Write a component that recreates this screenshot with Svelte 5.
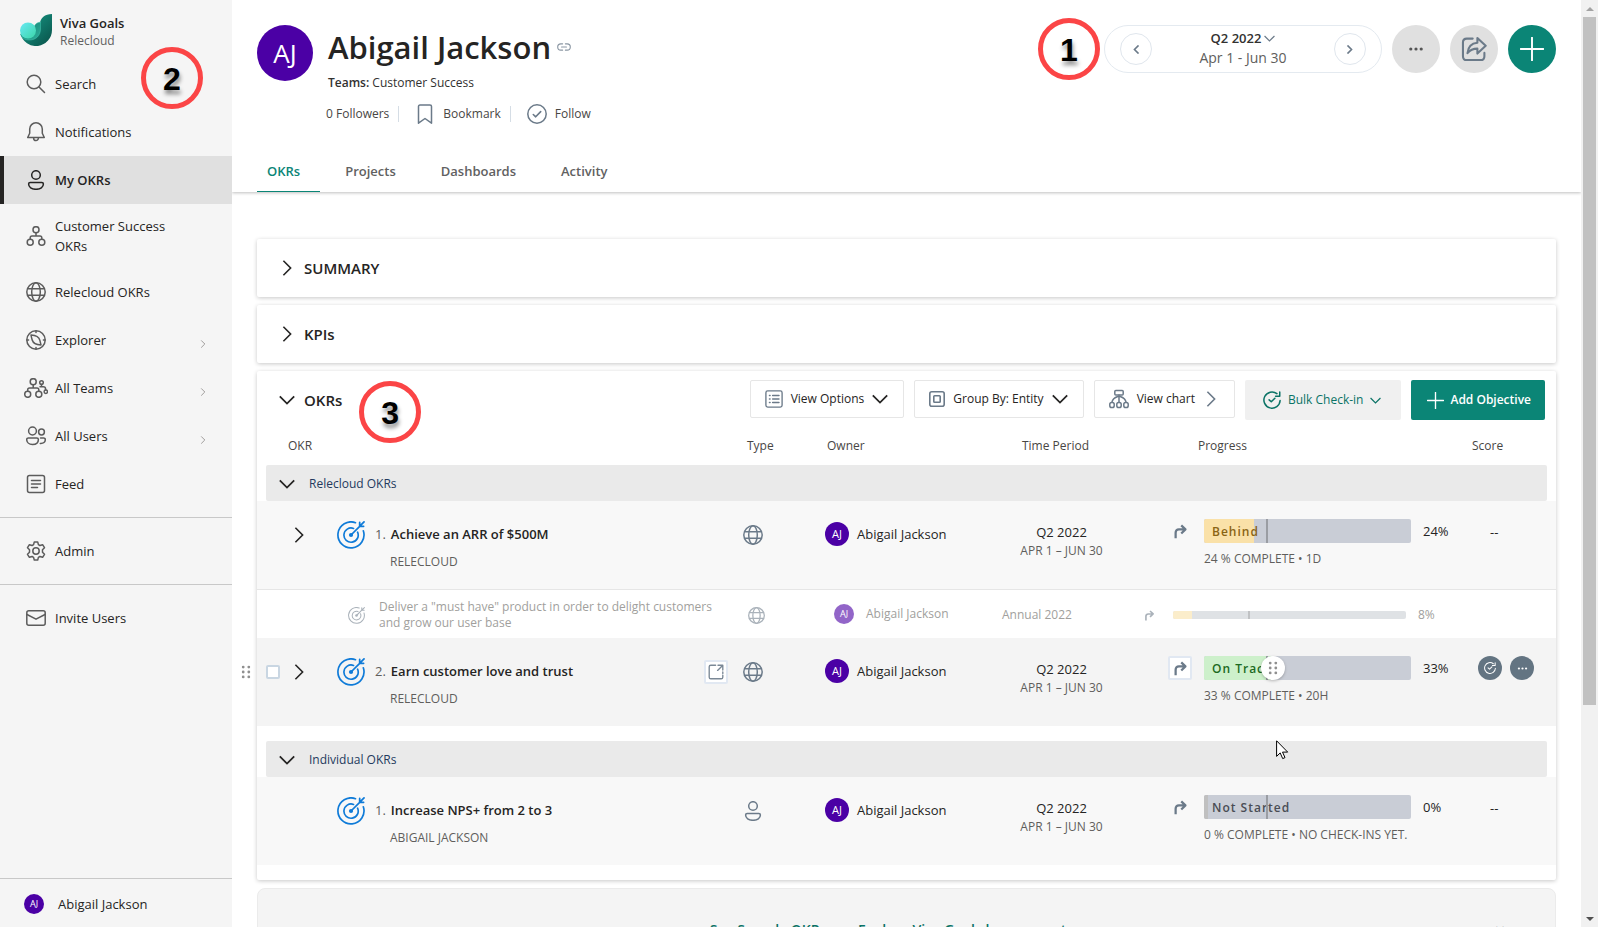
<script>
  const nav = [
    { label: 'Search', icon: 'search' },
    { label: 'Notifications', icon: 'bell' },
    { label: 'My OKRs', icon: 'person', active: true },
    { label: 'Customer Success OKRs', icon: 'org', tall: true },
    { label: 'Relecloud OKRs', icon: 'globe' },
    { label: 'Explorer', icon: 'compass', more: true },
    { label: 'All Teams', icon: 'teams', more: true },
    { label: 'All Users', icon: 'users', more: true },
    { label: 'Feed', icon: 'feed' }
  ];

  const tabs = ['OKRs', 'Projects', 'Dashboards', 'Activity'];

  const groups = [
    {
      name: 'Relecloud OKRs',
      rows: [
        {
          n: 1, title: 'Achieve an ARR of $500M', team: 'RELECLOUD', type: 'globe', expand: true,
          status: 'Behind', tone: 'behind', percent: 24, fill: 24, note: '24 % COMPLETE • 1D',
          child: {
            title: 'Deliver a "must have" product in order to delight customers and grow our user base',
            period: 'Annual 2022', percent: 8
          }
        },
        {
          n: 2, title: 'Earn customer love and trust', team: 'RELECLOUD', type: 'globe', expand: true, hover: true,
          status: 'On Track', tone: 'track', percent: 33, fill: 33, note: '33 % COMPLETE • 20H'
        }
      ]
    },
    {
      name: 'Individual OKRs',
      rows: [
        {
          n: 1, title: 'Increase NPS+ from 2 to 3', team: 'ABIGAIL JACKSON', type: 'person',
          status: 'Not Started', tone: 'idle', percent: 0, fill: 2, note: '0 % COMPLETE • NO CHECK-INS YET.'
        }
      ]
    }
  ];
</script>

{#snippet icon(name, size = 20)}
  <svg class="icon" width={size} height={size} viewBox="0 0 20 20" fill="none" stroke="currentColor" stroke-width="1.5" stroke-linecap="round" stroke-linejoin="round" aria-hidden="true">
    {#if name === 'search'}
      <circle cx="8" cy="8" r="6.8" /><path d="M13 13l5.5 5.5" />
    {:else if name === 'bell'}
      <path d="M10 .8a6.3 6.3 0 0 0-6.3 6.3v4.2l-2 4.2h16.6l-2-4.2V7.1A6.3 6.3 0 0 0 10 .8zM7.6 16a2.4 2.6 0 0 0 4.8 0" />
    {:else if name === 'person'}
      <circle cx="10" cy="5" r="4.3" /><path d="M4.2 12.5h11.6c1 0 1.6.7 1.6 1.5 0 3-3 5.3-7.4 5.3S2.6 17 2.6 14c0-.8.6-1.5 1.6-1.5z" />
    {:else if name === 'org'}
      <circle cx="10" cy="3.7" r="3" /><circle cx="4.2" cy="16.2" r="3" /><circle cx="15.8" cy="16.2" r="3" /><path d="M10 6.8V10M4.2 13v-1.2c0-1.1.7-1.8 1.8-1.8h8c1.1 0 1.8.7 1.8 1.8V13" />
    {:else if name === 'globe'}
      <circle cx="10" cy="10" r="9.2" /><ellipse cx="10" cy="10" rx="4.3" ry="9.2" /><path d="M1.7 6.7h16.6M1.7 13.3h16.6" />
    {:else if name === 'compass'}
      <circle cx="10" cy="10" r="9.2" /><path d="M5 5c3.5.2 8 1.7 8.8 5.2.5 2 .9 3.3 1.2 4.800-3.500-.2-7.800-1.500-8.800-5C5.600 8 5.200 6.500 5 5zM10 1v1.600M10 17.400V19M1 10h1.600M17.400 10H19" />
    {:else if name === 'feed'}
      <rect x="1.500" y="1.500" width="17" height="17" rx="2" /><path d="M5.500 6.500h9M5.500 10h9M5.500 13.500h6" />
    {:else if name === 'users'}
      <circle cx="6.500" cy="5" r="3.900" /><circle cx="15.500" cy="6" r="2.900" /><path d="M2.300 12h8.500c1 0 1.600.5 1.600 1.400 0 3-2.400 5-5.900 5s-5.800-2-5.800-5c0-.9.600-1.400 1.600-1.400zM14.500 12h3.200c1 0 1.600.5 1.600 1.400 0 2.700-1.800 4.300-5 4.100" />
    {:else if name === 'gear'}
      <circle cx="10" cy="10" r="3.200" /><path d="M8.300.9h3.400l.7 2.700 1.500.9 2.700-.8 1.900 3-2 2v2.600l2 2-1.900 3-2.700-.8-1.500.9-.7 2.700H8.300l-.7-2.700-1.500-.9-2.700.8-1.900-3 2-2V8.700l-2-2 1.900-3 2.700.8 1.500-.9z" />
    {:else if name === 'mail'}
      <rect x=".8" y="2.800" width="18.400" height="14.400" rx="2" /><path d="M1 6.500l9 4.700 9-4.700" />
    {:else if name === 'bookmark'}
      <path d="M3.500 19.200V2.600c0-1 .5-1.600 1.500-1.600h10c1 0 1.500.6 1.500 1.600v16.600L10 14.500z" />
    {:else if name === 'follow'}
      <circle cx="10" cy="10" r="9.200" /><path d="M6.300 10.500l2.400 2.300 5-5.200" stroke-width="1.600" />
    {:else if name === 'list'}
      <rect x="1" y="1" width="18" height="18" rx="2" /><path d="M8.500 6h7M8.500 10h7M8.500 14h7M5 6h.6M5 10h.6M5 14h.6" stroke-width="1.700" />
    {:else if name === 'group'}
      <rect x="1" y="1" width="18" height="18" rx="2.500" stroke-width="2" /><rect x="6" y="6" width="8" height="8" rx="1" stroke-width="2" />
    {:else if name === 'chart'}
      <rect x="5.800" y="1.500" width="8.400" height="4.600" rx="1" /><rect x=".8" y="13.500" width="4.400" height="5" rx="1.800" /><rect x="7.800" y="13.500" width="4.400" height="5" rx="1.800" /><rect x="14.800" y="13.500" width="4.400" height="5" rx="1.800" /><path d="M10 6v7M8.800 7.500C5 8.800 3.400 10.500 3 13M11.200 7.500c3.800 1.300 5.400 3 5.800 5.500" />
    {:else if name === 'checkin'}
      <path d="M15.500 2.900A9 9 0 1 0 19 10.500M18.600 1.200v4.600h-4.600M6.800 9.800l2.400 2.200 4-4" stroke-width="1.700" />
    {:else if name === 'target'}
      <path d="M13.200 1.200A9.300 9.300 0 1 0 18.800 7M11.800 5.300A5.100 5.100 0 1 0 14.700 8" stroke-width="1.200" /><circle cx="10" cy="10" r="1.500" fill="currentColor" stroke="none" /><path d="M10 10l6.200-6.200M16.200 1v2.800H19M19.300.7l-3 3" stroke-width="1.250" />
    {:else if name === 'jump'}
      <path d="M3.500 19v-7.500c0-2.800 1.500-4.300 4.300-4.300H16M11 1.800l5.600 5.400L11 12.600" stroke-width="3" stroke-linecap="butt" />
    {:else if name === 'open'}
      <path d="M9.500 1.500h-6c-1.300 0-2 .7-2 2v13c0 1.300.7 2 2 2h13c1.300 0 2-.7 2-2v-2.500M18.500 12v-2M12 8l6.500-6.500M12.500 1.500h6v6" stroke-width="1.700" />
    {:else if name === 'share'}
      <path d="M9 2H4.500C2.600 2 1.500 3.200 1.500 5v10.500c0 1.900 1.100 3 3 3H15c1.800 0 3-1.100 3-3V13M5 13.200c.4-4.800 3.200-7.600 7.600-8V1.500l6.400 6-6.400 6V9.700c-3.400 0-5.600 1-7.600 3.500z" stroke-width="1.600" />
    {:else if name === 'plus'}
      <path d="M10 .5v19M.5 10h19" stroke-width="1.600" />
    {:else if name === 'dots'}
      <g fill="currentColor" stroke="none"><circle cx="3.500" cy="10" r="2" /><circle cx="10" cy="10" r="2" /><circle cx="16.500" cy="10" r="2" /></g>
    {:else if name === 'grip'}
      <g fill="currentColor" stroke="none"><circle cx="6" cy="3" r="2" /><circle cx="14" cy="3" r="2" /><circle cx="6" cy="10" r="2" /><circle cx="14" cy="10" r="2" /><circle cx="6" cy="17" r="2" /><circle cx="14" cy="17" r="2" /></g>
    {:else if name === 'link'}
      <path d="M8 5.500H5.500a4.500 4.500 0 0 0 0 9H8M12 5.500h2.500a4.500 4.500 0 0 1 0 9H12M6.500 10h7" stroke-width="1.600" />
    {:else if name === 'down'}
      <path d="M1 5.500l9 9 9-9" stroke-width="2.200" stroke-linecap="butt" stroke-linejoin="miter" />
    {:else if name === 'right'}
      <path d="M5.500 1l9 9-9 9" stroke-width="2" stroke-linecap="butt" stroke-linejoin="miter" />
    {:else if name === 'stepleft'}
      <path d="M14.500 1l-9 9 9 9" stroke-width="3.600" stroke-linecap="butt" stroke-linejoin="miter" />
    {:else if name === 'stepright'}
      <path d="M5.500 1l9 9-9 9" stroke-width="3.600" stroke-linecap="butt" stroke-linejoin="miter" />
    {/if}
  </svg>
{/snippet}

<div class="app">
  <aside class="sidebar">
    <div class="brand">
      <svg width="32" height="32" viewBox="0 0 32 32" aria-hidden="true">
        <defs>
          <linearGradient id="leaf" x1="0" y1="0" x2="1" y2="1"><stop offset="0" stop-color="#17a08c" /><stop offset="1" stop-color="#0a5048" /></linearGradient>
          <linearGradient id="mid" x1="0" y1="0" x2="1" y2="1"><stop offset="0" stop-color="#0f7a6c" /><stop offset="1" stop-color="#2fb29d" /></linearGradient>
          <linearGradient id="orb" x1="0" y1="0" x2="1" y2="1"><stop offset="0" stop-color="#6ae9f5" /><stop offset="1" stop-color="#3bd6a8" /></linearGradient>
        </defs>
        <path d="M32 0v16A16 16 0 0 1 .5 20L10 24l10-8v-6C20 4 25 0 32 0z" fill="url(#leaf)" />
        <path d="M20.500 8v7c0 6.500-4.500 11-11 11-4.500 0-8-2-9-6L8 22l6-9c1-3 3-4.500 6.500-5z" fill="url(#mid)" stroke="#49c4b0" stroke-width=".5" />
        <circle cx="8" cy="16.500" r="8" fill="url(#orb)" />
      </svg>
      <div class="brand-text"><strong>Viva Goals</strong><span>Relecloud</span></div>
    </div>
    <nav aria-label="Main">
      {#each nav as item}
        <a href="#{item.icon}" class="nav-item" class:active={item.active} class:tall={item.tall}>
          {#if item.icon === 'teams'}
            <svg class="icon wide" width="24" height="20" viewBox="0 0 24 20" fill="none" stroke="currentColor" stroke-width="1.500" stroke-linecap="round" aria-hidden="true">
              <circle cx="9.200" cy="3.700" r="3" /><circle cx="3.700" cy="16.300" r="3" /><circle cx="14.800" cy="16.300" r="3" /><path d="M9.200 6.800V10M3.700 13v-1.200c0-1.100.7-1.800 1.800-1.800h7.500c1.100 0 1.800.7 1.800 1.800V13" /><circle cx="17.500" cy="4.500" r="1.800" /><circle cx="21.800" cy="13.800" r="1.700" /><path d="M17.500 6.500v2.200M16 8.800h3.200c1.500 0 2.400.8 2.400 2.200v.8" />
            </svg>
          {:else}
            {@render icon(item.icon)}
          {/if}
          <span>{item.label}</span>
          {#if item.more}<span class="more">{@render icon('right', 8)}</span>{/if}
        </a>
      {/each}
      <hr />
      <a href="#admin" class="nav-item">{@render icon('gear')}<span>Admin</span></a>
      <hr />
      <a href="#invite" class="nav-item">{@render icon('mail')}<span>Invite Users</span></a>
    </nav>
    <a href="#me" class="me"><span class="avatar small">AJ</span><span>Abigail Jackson</span></a>
    <div class="callout two">2</div>
  </aside>

  <main>
    <header>
      <div class="hero">
        <span class="avatar large">AJ</span>
        <div class="identity">
          <h1>Abigail Jackson <a href="#link" aria-label="Copy link">{@render icon('link', 14)}</a></h1>
          <p class="teams"><b>Teams:</b> Customer Success</p>
          <div class="actions">
            <span>0 Followers</span>
            <button>{@render icon('bookmark')}Bookmark</button>
            <button>{@render icon('follow')}Follow</button>
          </div>
        </div>
        <div class="tools">
          <div class="callout">1</div>
          <div class="period">
            <button class="step" aria-label="Previous period">{@render icon('stepleft', 9)}</button>
            <div class="range">
              <button>Q2 2022{@render icon('down', 11)}</button>
              <span>Apr 1 - Jun 30</span>
            </div>
            <button class="step" aria-label="Next period">{@render icon('stepright', 9)}</button>
          </div>
          <button class="round" aria-label="More options">{@render icon('dots', 16)}</button>
          <button class="round share" aria-label="Share">{@render icon('share', 26)}</button>
          <button class="round add" aria-label="Add">{@render icon('plus', 24)}</button>
        </div>
      </div>
      <div class="tabs" role="tablist">
        {#each tabs as tab, i}
          <button role="tab" aria-selected={i === 0} class:selected={i === 0}>{tab}</button>
        {/each}
      </div>
    </header>

    <div class="content">
      <section class="card fold"><button>{@render icon('right', 16)}SUMMARY</button></section>
      <section class="card fold"><button>{@render icon('right', 16)}KPIs</button></section>

      <section class="card">
        <div class="toolbar">
          <button class="heading">{@render icon('down', 16)}OKRs</button>
          <div class="callout">3</div>
          <div class="buttons">
            <button class="outline">{@render icon('list', 18)}<span>View Options</span>{@render icon('down', 16)}</button>
            <button class="outline">{@render icon('group', 16)}<span>Group By: Entity</span>{@render icon('down', 16)}</button>
            <button class="outline chart">{@render icon('chart')}<span>View chart</span>{@render icon('right', 16)}</button>
            <button class="bulk">{@render icon('checkin', 18)}<span>Bulk Check-in</span>{@render icon('down', 11)}</button>
            <button class="primary">{@render icon('plus', 17)}<span>Add Objective</span></button>
          </div>
        </div>

        <table>
          <colgroup><col /><col class="c-type" /><col class="c-owner" /><col class="c-time" /><col class="c-progress" /><col class="c-score" /></colgroup>
          <thead>
            <tr><th>OKR</th><th>Type</th><th>Owner</th><th>Time Period</th><th>Progress</th><th>Score</th></tr>
          </thead>
          {#each groups as group}
            <tbody>
              <tr>
                <td colspan="6" class="group"><button>{@render icon('down', 16)}{group.name}</button></td>
              </tr>
              {#each group.rows as row}
                <tr class="objective" class:hover={row.hover} class:parent={row.child}>
                  <td>
                    {#if row.hover}<span class="drag">{@render icon('grip', 14)}</span>{/if}
                    <div class="line">
                      <span class="pick">{#if row.hover}<input type="checkbox" aria-label="Select objective" />{/if}</span>
                      <span class="expand">{#if row.expand}<button aria-label="Expand">{@render icon('right', 16)}</button>{/if}</span>
                      <span class="blue">{@render icon('target', 28)}</span>
                      <span class="number">{row.n}.</span>
                      <a href="#objective">{row.title}</a>
                      {#if row.hover}<button class="boxed open" aria-label="Open">{@render icon('open', 16)}</button>{/if}
                    </div>
                    <div class="team">{row.team}</div>
                  </td>
                  <td class="type">{@render icon(row.type)}</td>
                  <td class="owner"><div><span class="avatar">AJ</span>Abigail Jackson</div></td>
                  <td class="time"><div>Q2 2022</div><small>APR 1 – JUN 30</small></td>
                  <td class="progress">
                    <div class="meter-row">
                      <button class="jump" class:boxed={row.hover} aria-label="Go to source">{@render icon('jump', 15)}</button>
                      <div class="bar {row.tone}">
                        <i style="width: {row.fill}%"></i><span>{row.status}</span><b></b>
                        {#if row.hover}<em>{@render icon('grip', 14)}</em>{/if}
                      </div>
                      <span class="pct">{row.percent}%</span>
                    </div>
                    <div class="note">{row.note}</div>
                  </td>
                  <td class="score">
                    {#if row.hover}
                      <div class="quick">
                        <button aria-label="Check in">{@render icon('checkin', 12)}</button>
                        <button aria-label="More">{@render icon('dots', 11)}</button>
                      </div>
                    {:else}<span>--</span>{/if}
                  </td>
                </tr>
                {#if row.child}
                  <tr class="child">
                    <td><div class="line">{@render icon('target', 17)}<span>{row.child.title}</span></div></td>
                    <td class="type">{@render icon('globe', 17)}</td>
                    <td class="owner"><div><span class="avatar small">AJ</span>Abigail Jackson</div></td>
                    <td class="time">{row.child.period}</td>
                    <td class="progress">
                      <div class="meter-row">
                        <span class="jump">{@render icon('jump', 11)}</span>
                        <div class="bar thin behind"><i style="width: {row.child.percent}%"></i><b></b></div>
                        <span class="pct">{row.child.percent}%</span>
                      </div>
                    </td>
                    <td></td>
                  </tr>
                {/if}
              {/each}
            </tbody>
          {/each}
        </table>
      </section>

      <section class="tips">
        <p><a href="#samples">See Sample OKRs</a> <span>or</span> <a href="#concepts">Explore Viva Goals key concepts</a></p>
        <button aria-label="Dismiss">×</button>
      </section>
    </div>
  </main>

  <div class="scrollbar" aria-hidden="true"><span class="arrow up"></span><span class="thumb"></span><span class="arrow"></span></div>

  <svg class="pointer" width="13" height="20" viewBox="0 0 13 20" aria-hidden="true">
    <path d="M.6.8v15.600l3.600-3.500 2.500 5.700 2.300-1-2.500-5.500h5.200z" fill="#fff" stroke="#000" stroke-width="1" />
  </svg>
</div>

<style>
  :global(body) {
    margin: 0;
    overflow: hidden;
  }
  .app {
    display: grid;
    grid-template-columns: 232px minmax(0, 1fr) 17px;
    height: 100vh;
    overflow: hidden;
    position: relative;
    background: #fff;
    color: #252423;
    font: 13px/20px "Open Sans", "Noto Sans", sans-serif;
  }
  button {
    border: 0;
    padding: 0;
    background: none;
    font: inherit;
    color: inherit;
    display: flex;
    align-items: center;
    white-space: nowrap;
  }
  a {
    color: inherit;
    text-decoration: none;
  }
  .icon {
    flex: none;
    display: block;
  }
  .avatar {
    flex: none;
    display: grid;
    place-items: center;
    width: 24px;
    height: 24px;
    border-radius: 50%;
    background: #4b00a5;
    color: #fff;
    font-size: 11px;
  }
  .avatar.small {
    width: 20px;
    height: 20px;
    font-size: 9px;
  }
  .avatar.large {
    width: 56px;
    height: 56px;
    font-size: 26px;
  }
  .callout {
    box-sizing: border-box;
    flex: none;
    width: 62px;
    height: 62px;
    border: 5px solid #fb4546;
    border-radius: 50%;
    text-align: center;
    font: bold 32px/54px "Liberation Sans", Arial, sans-serif;
    color: #000;
    text-shadow: 1px 4px 4px rgba(0, 0, 0, 0.45);
  }

  /* Sidebar */
  .sidebar {
    position: relative;
    display: flex;
    flex-direction: column;
    background: #f5f5f5;
  }
  .callout.two {
    position: absolute;
    left: 141px;
    top: 47px;
  }
  .brand {
    display: flex;
    gap: 8px;
    padding: 14px 20px;
    height: 32px;
  }
  .brand-text {
    display: flex;
    flex-direction: column;
    font-size: 12px;
    line-height: 18px;
    color: #616161;
  }
  .brand-text strong {
    font-size: 13px;
    font-weight: 600;
    color: #252423;
  }
  nav {
    flex: 1;
  }
  .nav-item {
    box-sizing: border-box;
    display: flex;
    align-items: center;
    gap: 9px;
    min-height: 48px;
    padding: 0 25px 0 26px;
  }
  .nav-item .icon {
    color: #5c5c5c;
  }
  .nav-item .wide {
    margin: 0 -2px;
  }
  .nav-item.tall {
    min-height: 64px;
    padding-right: 48px;
  }
  .nav-item.active {
    padding-left: 22px;
    border-left: 4px solid #252423;
    background: #e0e0e0;
    font-weight: 600;
  }
  .nav-item.active .icon {
    color: #252423;
  }
  .more {
    margin-left: auto;
    padding-top: 8px;
  }
  .nav-item .more .icon {
    color: #8a8886;
  }
  hr {
    margin: 9px 0;
    border: 0;
    border-top: 1px solid #c8c8c8;
  }
  .me {
    display: flex;
    align-items: center;
    gap: 14px;
    height: 46px;
    padding: 2px 24px 0;
    border-top: 1px solid #c8c8c8;
  }

  /* Page header */
  main {
    overflow: hidden;
  }
  header {
    height: 192px;
    display: flex;
    flex-direction: column;
    justify-content: space-between;
    box-shadow: 0 1px 3px rgba(0, 0, 0, 0.25);
  }
  .hero {
    display: flex;
    align-items: flex-start;
    padding: 25px 25px 0;
  }
  .identity {
    flex: 1;
    padding-left: 15px;
  }
  h1 {
    display: flex;
    align-items: center;
    gap: 6px;
    margin: 0;
    font-size: 31px;
    line-height: 44px;
    font-weight: 600;
  }
  h1 a {
    color: #8a96a3;
  }
  .teams {
    margin: 4px 0 0;
    font-size: 12px;
    color: #323130;
  }
  .teams b {
    font-weight: 600;
  }
  .actions {
    display: flex;
    align-items: center;
    margin: 11px 0 0 -2px;
    font-size: 12px;
    color: #484644;
  }
  .actions button {
    gap: 8px;
    margin-left: 9px;
    padding-left: 16px;
    height: 16px;
    border-left: 1px solid #d5dde5;
  }
  .actions .icon {
    color: #6b7a89;
  }
  .tools {
    display: flex;
    align-items: center;
    gap: 10px;
    margin-top: -7px;
  }
  .tools .callout {
    margin-right: -6px;
  }
  .period {
    box-sizing: border-box;
    display: flex;
    align-items: center;
    justify-content: space-between;
    width: 278px;
    height: 48px;
    padding: 0 15px;
    border: 1px solid #e4eaf0;
    border-radius: 24px;
  }
  .step {
    justify-content: center;
    box-sizing: border-box;
    width: 32px;
    height: 32px;
    border: 1px solid #e0e6ed;
    border-radius: 50%;
    color: #6b7a89;
  }
  .range {
    display: flex;
    flex-direction: column;
    align-items: center;
    padding-bottom: 2px;
    font-size: 14px;
    color: #605e5c;
  }
  .range button {
    gap: 3px;
    font-size: 13px;
    font-weight: 600;
    color: #323130;
  }
  .range .icon {
    color: #6b7a89;
  }
  .round {
    justify-content: center;
    width: 48px;
    height: 48px;
    border-radius: 50%;
    background: #e0e0e0;
    color: #555;
  }
  .round.share {
    color: #6b7a89;
  }
  .round.add {
    background: #0b8576;
    color: #fff;
  }
  .tabs {
    display: flex;
    gap: 15px;
    padding-left: 25px;
  }
  .tabs button {
    box-sizing: border-box;
    height: 41px;
    padding: 0 20px 0 10px;
    border-bottom: 1px solid transparent;
    font-weight: 600;
    color: #616161;
  }
  .tabs .selected {
    color: #0b8576;
    border-color: #0b8576;
  }

  /* Cards */
  .content {
    display: flex;
    flex-direction: column;
    gap: 8px;
    padding: 47px 25px 0;
  }
  .card {
    background: #fff;
    border-radius: 2px;
    box-shadow: 0 1px 4px rgba(0, 0, 0, 0.22);
  }
  .fold {
    display: flex;
    height: 58px;
    padding: 0 22px;
  }
  .fold button,
  .heading {
    gap: 9px;
    font-size: 15px;
    font-weight: 600;
    color: #252423;
  }
  .toolbar {
    display: flex;
    align-items: flex-start;
    height: 48px;
    padding: 9px 11px 0 22px;
  }
  .toolbar .heading {
    height: 40px;
  }
  .toolbar .callout {
    margin: 1px 0 0 17px;
  }
  .buttons {
    display: flex;
    gap: 10px;
    margin-left: auto;
    font-size: 12px;
  }
  .buttons button {
    box-sizing: border-box;
    height: 40px;
    border-radius: 2px;
  }
  .buttons .outline {
    height: 38px;
    padding: 0 15px 0 14px;
    border: 1px solid #e6e6e6;
    gap: 8px;
  }
  .outline .icon:first-child,
  .chart .icon {
    color: #6b7a89;
  }
  .buttons .bulk {
    gap: 7px;
    padding: 0 20px 0 18px;
    background: #f0f0f0;
    color: #0b7366;
  }
  .buttons .primary {
    gap: 6px;
    padding: 0 14px 0 16px;
    background: #0b8576;
    color: #fff;
    font-weight: 600;
  }

  /* Objectives table */
  table {
    width: 100%;
    table-layout: fixed;
    border-collapse: separate;
    border-spacing: 0;
  }
  .c-type { width: 82px; }
  .c-owner { width: 175px; }
  .c-time { width: 139px; }
  .c-progress { width: 339px; }
  .c-score { width: 86px; }
  th,
  td {
    padding: 0;
    text-align: left;
    vertical-align: top;
  }
  th {
    height: 37px;
    font-size: 12px;
    line-height: 36px;
    font-weight: 500;
    color: #484644;
  }
  th:nth-child(1) { padding-left: 31px; }
  th:nth-child(2) { padding-left: 12px; }
  th:nth-child(3) { padding-left: 10px; }
  th:nth-child(4) { padding-right: 12px; text-align: center; }
  th:nth-child(5) { padding-left: 67px; }
  th:nth-child(6) { padding-left: 2px; }
  tbody::after {
    content: "";
    display: block;
    height: 15px;
  }
  td.group {
    padding: 0 9px;
  }
  .group button {
    box-sizing: border-box;
    width: 100%;
    height: 36px;
    padding: 2px 0 0 13px;
    gap: 14px;
    border-radius: 2px;
    background: #eaeaea;
    font-size: 12px;
    color: #243a5e;
  }
  .group .icon {
    color: #252423;
  }
  .objective td {
    height: 88px;
    position: relative;
    background: #f8f8f8;
  }
  .parent td {
    border-bottom: 1px solid #e6e6e6;
  }
  .hover td {
    background: #f4f4f4;
  }
  .objective .line {
    display: flex;
    align-items: center;
    height: 28px;
    padding: 20px 7px 0 9px;
  }
  .drag {
    position: absolute;
    left: -18px;
    top: 27px;
    color: #8f8f8f;
  }
  .pick {
    width: 28px;
  }
  .pick input {
    appearance: none;
    display: block;
    box-sizing: border-box;
    width: 14px;
    height: 14px;
    margin: 0;
    border: 2px solid #c9d6e2;
    border-radius: 2px;
    background: #fff;
  }
  .expand {
    width: 40px;
    padding-left: 4px;
    margin-left: -7px;
  }
  .blue {
    padding-left: 6px;
    color: #0f7bd8;
  }
  .number {
    padding: 0 5px 2px 10px;
    color: #605e5c;
  }
  .line a {
    flex: 1;
    padding-bottom: 2px;
    font-weight: 600;
  }
  .boxed {
    border: 2px solid #e1e8f2;
    border-radius: 2px;
    background: #fff;
  }
  .open {
    box-sizing: border-box;
    justify-content: center;
    width: 24px;
    height: 24px;
    color: #7a8896;
  }
  .team {
    padding: 3px 0 0 133px;
    font-size: 12px;
    color: #605e5c;
  }
  .objective .type {
    padding: 24px 0 0 8px;
    height: 64px;
    color: #6b7a89;
  }
  .owner div {
    display: flex;
    align-items: center;
    gap: 8px;
    padding: 21px 0 0 8px;
  }
  .objective .time {
    text-align: center;
    padding-top: 22px;
    height: 66px;
    line-height: 18px;
  }
  small {
    font-size: 12px;
    color: #605e5c;
  }
  .meter-row {
    display: grid;
    grid-template-columns: 24px 1fr 47px;
    align-items: center;
    column-gap: 12px;
    padding: 18px 0 0 37px;
  }
  .jump {
    box-sizing: border-box;
    display: flex;
    justify-content: center;
    align-items: center;
    width: 24px;
    height: 24px;
    color: #6b7a89;
  }
  .bar {
    position: relative;
    height: 24px;
    border-radius: 2px;
    background: #c9cdd6;
  }
  .bar i {
    display: block;
    height: 100%;
    border-radius: 2px 0 0 2px;
    background: #c0c0c0;
  }
  .bar.behind i { background: #fae1a8; }
  .bar.track i { background: #cdf0cb; }
  .bar span {
    position: absolute;
    left: 8px;
    top: 0;
    font-size: 12px;
    line-height: 25px;
    font-weight: 600;
    letter-spacing: 1px;
    color: #4a4d55;
  }
  .bar.behind span { color: #8a6414; }
  .bar.track span { color: #1c6a22; }
  .bar b {
    position: absolute;
    left: 30%;
    top: 0;
    width: 2px;
    height: 100%;
    background: #9a9da3;
  }
  .bar em {
    position: absolute;
    left: 57px;
    top: 0;
    display: grid;
    place-items: center;
    width: 24px;
    height: 24px;
    border-radius: 50%;
    background: #fff;
    box-shadow: 0 1px 3px rgba(0, 0, 0, 0.25);
    color: #8f8f8f;
  }
  .note {
    padding: 7px 0 0 73px;
    font-size: 12px;
    line-height: 18px;
    color: #605e5c;
    white-space: nowrap;
  }
  .score > span {
    display: block;
    padding: 21px 0 0 20px;
  }
  .quick {
    display: flex;
    gap: 8px;
    padding: 18px 0 0 8px;
  }
  .quick button {
    justify-content: center;
    width: 24px;
    height: 24px;
    border-radius: 50%;
    background: #637482;
    color: #fff;
  }
  .child {
    font-size: 12px;
    line-height: 16px;
    color: #a19f9d;
  }
  .child td {
    height: 48px;
  }
  .child .line {
    display: flex;
    align-items: center;
    gap: 14px;
    padding: 9px 4px 0 91px;
    color: #a19f9d;
  }
  .child .line span {
    max-width: 352px;
  }
  .child .icon {
    color: #aab2ba;
  }
  .child .type {
    padding: 17px 0 0 13px;
    height: 31px;
  }
  .child .avatar {
    opacity: 0.6;
  }
  .child .owner div {
    gap: 12px;
    padding: 14px 0 0 17px;
  }
  .child .time {
    padding: 17px 0 0 10px;
    height: 31px;
  }
  .child .meter-row {
    grid-template-columns: 24px 1fr 52px;
    padding: 13px 0 0 6px;
  }
  .bar.thin {
    height: 8px;
    background: #dfe2e5;
  }
  .bar.thin i { background: #fbedcb; }
  .bar.thin b { left: 32%; background: #c0c2c4; }

  /* Tips panel */
  .tips {
    display: flex;
    align-items: flex-start;
    justify-content: center;
    position: relative;
    box-sizing: border-box;
    height: 80px;
    padding-top: 31px;
    border: 1px solid #ebebeb;
    border-radius: 8px;
    background: #f4f4f4;
    font-size: 14px;
    color: #0b7366;
  }
  .tips p {
    margin: 0;
    padding-right: 30px;
    font-weight: 600;
  }
  .tips span {
    padding: 0 5px;
    font-weight: 400;
  }
  .tips button {
    position: absolute;
    right: 50px;
    top: 31px;
    font-size: 18px;
    color: #605e5c;
  }

  .scrollbar {
    display: grid;
    grid-template-rows: 17px 1fr 17px;
    justify-items: center;
    background: #f1f1f1;
  }
  .thumb {
    width: 13px;
    height: 77%;
    background: #c1c1c1;
  }
  .arrow {
    align-self: center;
    border: 4px solid transparent;
    border-top-color: #505050;
    border-bottom: 0;
  }
  .arrow.up {
    border-top: 0;
    border-bottom: 4px solid #a3a3a3;
  }
  .pointer {
    position: absolute;
    left: 1276px;
    top: 740px;
  }
</style>
